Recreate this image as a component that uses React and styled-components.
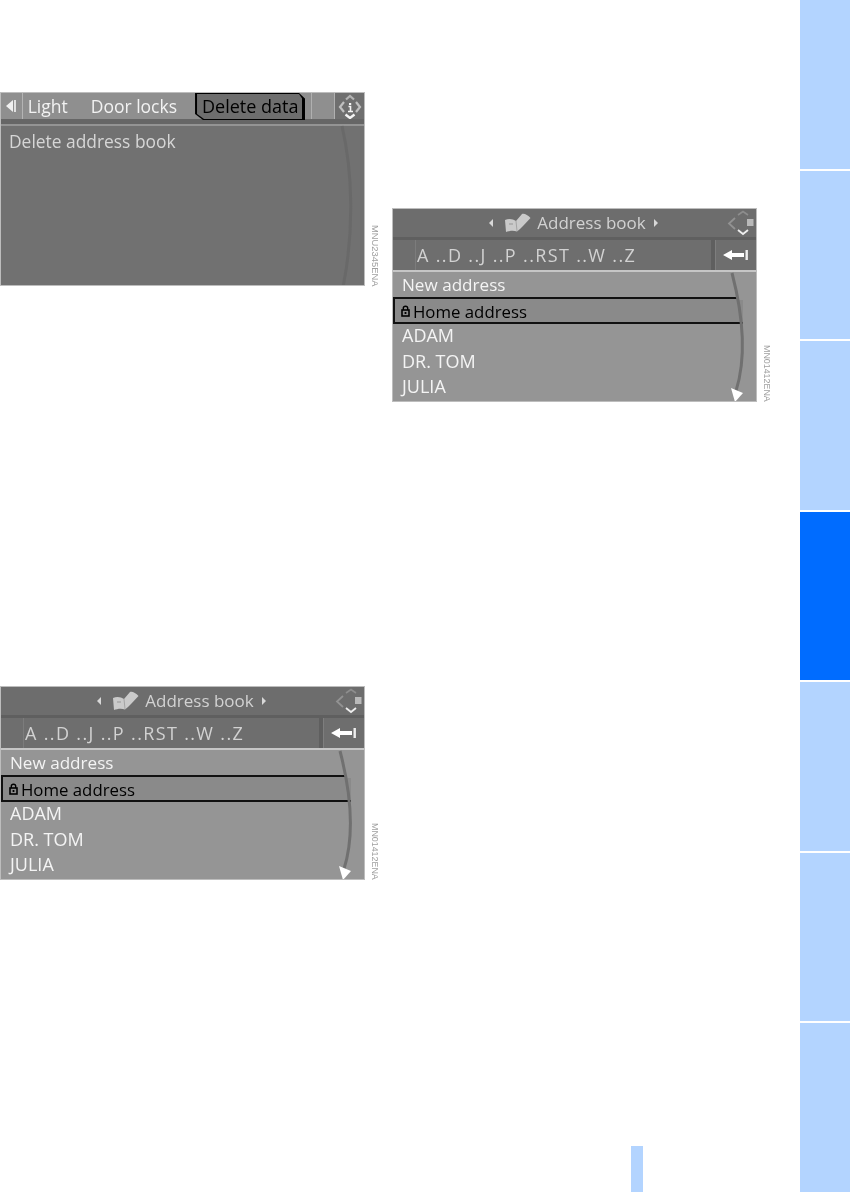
import React from "react";
import styled, { createGlobalStyle } from "styled-components";

const Global = createGlobalStyle`
  html, body { margin: 0; padding: 0; background: #fff; }
  #root { width: 850px; height: 1192px; overflow: hidden; }
`;

const Page = styled.div`
  display: flex;
  width: 850px;
  height: 1192px;
  font-family: "Open Sans", "Noto Sans", sans-serif;
`;
const Content = styled.main`
  flex: 0 0 800px;
  display: flex;
`;
const LeftColumn = styled.section`
  width: 392px;
  padding-top: 92px;
  display: flex;
  flex-direction: column;
  gap: 400px;
`;
const RightColumn = styled.section`
  flex: 1;
  padding-top: 208px;
  display: flex;
  flex-direction: column;
`;
const PageMarker = styled.div`
  margin-top: auto;
  margin-left: 239px;
  width: 12px;
  height: 46px;
  background: #b3d4ff;
`;
const SideTabs = styled.nav`
  flex: 0 0 50px;
  display: flex;
  flex-direction: column;
  gap: 2px;
`;
const SideTab = styled.div`
  flex: 1;
  background: ${(p) => (p.$active ? "#006cff" : "#b3d4ff")};
`;

const Figure = styled.figure`
  margin: 0;
  display: flex;
  align-items: flex-end;
  gap: 6px;
`;
const FigureCode = styled.figcaption`
  writing-mode: vertical-rl;
  font-family: "Liberation Sans", sans-serif;
  font-size: ${(p) => p.$size}px;
  line-height: 8px;
  color: #a0a0a0;
  filter: blur(0.35px);
`;
const Screen = styled.div`
  position: relative;
  width: 365px;
  height: 194px;
  box-sizing: border-box;
  display: flex;
  flex-direction: column;
  overflow: hidden;
  background: ${(p) => p.$bg};
  border: 1px solid #bdbdbd;
  filter: blur(0.35px);
`;
const Arc = styled.svg`
  position: absolute;
  top: 0;
  left: 0;
  pointer-events: none;
`;

/* Settings screen */
const TabBar = styled.div`
  height: 26px;
  display: flex;
  align-items: stretch;
  background: #8f8f8f;
  font-size: 17.5px;
  color: #f2f2f2;
`;
const TabArrowCell = styled.div`
  width: 21px;
  display: flex;
  align-items: center;
  justify-content: center;
  border-right: 1px solid #b4b4b4;
`;
const TabLabel = styled.div`
  margin-left: ${(p) => p.$gap}px;
  line-height: 26px;
  white-space: nowrap;
`;
const ActiveTab = styled.div`
  margin-left: 18px;
  width: 112px;
  height: 27px;
  box-sizing: border-box;
  padding: 1px 3px 1px 2px;
  background: #000;
  clip-path: polygon(0 0, 104px 0, 100% 6px, 100% 100%, 8px 100%, 0 calc(100% - 6px));
`;
const ActiveLabel = styled.div`
  height: 100%;
  padding-left: 5px;
  background: #6e6e6e;
  color: #000;
  font-size: 18px;
  line-height: 24px;
  white-space: nowrap;
  clip-path: polygon(0 0, 102px 0, 100% 5px, 100% 100%, 7px 100%, 0 calc(100% - 5px));
`;
const TabRule = styled.div`
  margin-left: ${(p) => p.$gap}px;
  width: 1px;
  background: #b0b0b0;
`;
const InfoCell = styled.div`
  margin-left: auto;
  width: 29px;
  background: #6f6f6f;
  display: flex;
  align-items: center;
  justify-content: center;
`;
const HeaderShade = styled.div`
  height: 5px;
  background: #666;
`;
const HeaderLine = styled.div`
  height: 2px;
  background: ${(p) => p.$color};
`;
const PlainRow = styled.div`
  padding-left: 8px;
  height: 30px;
  line-height: 30px;
  font-size: 17.4px;
  color: #d6d6d6;
`;

/* Address book screen */
const TitleBar = styled.div`
  height: 28px;
  position: relative;
  display: flex;
  align-items: center;
  justify-content: center;
  background: #6d6d6d;
  color: #d2d2d2;
  font-size: 17px;
`;
const TitleGroup = styled.div`
  display: flex;
  align-items: center;
  margin-right: 2px;
`;
const BookSlot = styled.span`
  margin-left: 11px;
  display: flex;
`;
const Title = styled.span`
  margin: 0 8px 0 6px;
  line-height: 28px;
`;
const NavWidget = styled.div`
  position: absolute;
  top: 0;
  right: 0;
  height: 28px;
`;
const BarShade = styled.div`
  height: 3px;
  background: #5f5f5f;
`;
const AlphaRow = styled.div`
  height: 30px;
  display: flex;
  background: #5f5f5f;
  gap: 4px;
`;
const AlphaCell = styled.div`
  flex: 1;
  display: flex;
  background: #6e6e6e;
  color: #d2d2d2;
  font-size: 18px;
  letter-spacing: 1.35px;
  line-height: 30px;
  white-space: nowrap;
`;
const AlphaSpacer = styled.div`
  width: 22px;
  margin-right: 1px;
  border-right: 1px solid #7c7c7c;
`;
const BackCell = styled.div`
  width: 40px;
  display: flex;
  align-items: center;
  justify-content: center;
  background: #6e6e6e;
  border-left: 1px solid #7e7e7e;
`;
const List = styled.div`
  flex: 1;
  display: flex;
  flex-direction: column;
  font-size: 17.1px;
  color: #f4f4f4;
`;
const Row = styled.div`
  height: 25px;
  line-height: ${(p) => p.$lh || 25}px;
  padding-left: 9px;
  font-size: ${(p) => (p.$caps ? "18px" : "inherit")};
  white-space: nowrap;
`;
const SelectedRow = styled.div`
  width: 350px;
  height: 27px;
  box-sizing: border-box;
  display: flex;
  align-items: center;
  gap: 3px;
  padding: 1px 0 0 6px;
  border: 2px solid #111;
  border-right: none;
  background: #8a8a8a;
  color: #000;
  font-size: 16.8px;
  clip-path: polygon(0 0, 345px 0, 345px 3px, 100% 3px, 100% 100%, 0 100%);
`;

const TabArrow = () => (
  <svg width="12" height="14" viewBox="0 0 12 14">
    <path d="M8 1 L1 7 L8 13 Z" fill="#f0f0f0" />
    <rect x="9" y="1" width="2" height="12" fill="#e0e0e0" />
  </svg>
);
const InfoIcon = () => (
  <svg width="24" height="26" viewBox="0 0 24 26" fill="none">
    <path d="M8 6.5 L12 3 L16 6.5" stroke="#b4b4b4" strokeWidth="2.2" />
    <path d="M6 9 L2 14 L6 19" stroke="#c0c0c0" strokeWidth="2.2" />
    <path d="M18 9 L22 14 L18 19" stroke="#c0c0c0" strokeWidth="2.2" />
    <path d="M7.5 21.5 L12 25 L16.5 21.5" stroke="#f4f4f4" strokeWidth="2.4" />
    <path d="M10.5 13.5 H12.5 V18 M10 18.5 H15" stroke="#f4f4f4" strokeWidth="1.6" />
    <rect x="11" y="10" width="2.2" height="2" fill="#f4f4f4" />
  </svg>
);
const NavIcon = () => (
  <svg width="32" height="28" viewBox="0 0 32 28" fill="none">
    <path d="M14 6 L19 2.5 L24 6" stroke="#8d8d8d" strokeWidth="1.6" />
    <path d="M11 9 L5 14.5 L11 20" stroke="#929292" strokeWidth="1.8" />
    <rect x="23" y="10" width="6.5" height="7" fill="#b9b9b9" />
    <path d="M14 21 L19 25 L24 21" stroke="#eee" strokeWidth="1.8" />
  </svg>
);
const SmallTriangle = ({ dir }) => (
  <svg width="4" height="8" viewBox="0 0 4 8">
    <path d={dir === "left" ? "M4 0 L0 4 L4 8 Z" : "M0 0 L4 4 L0 8 Z"} fill="#d8d8d8" />
  </svg>
);
const BookIcon = () => (
  <svg width="27" height="20" viewBox="0 0 27 20">
    <path d="M1 7 C5 5 9 6 12 8 L18 1 C20 0 24 2 26.5 5 L19 13 C17 15 15 17 13 18.5 C9 17 5 18 2 19 Z" fill="#cacaca" />
    <path d="M12 8 L13 18" stroke="#a4a4a4" strokeWidth="1" />
    <path d="M5 11 H9" stroke="#b0b0b0" strokeWidth="2" />
  </svg>
);
const BackIcon = () => (
  <svg width="26" height="12" viewBox="0 0 26 12">
    <path d="M0 6 L9 1 V4 H21 V8 H9 V11 Z" fill="#fff" />
    <rect x="22.5" y="1" width="2.4" height="10" fill="#eee" />
  </svg>
);
const LockIcon = () => (
  <svg width="9" height="12" viewBox="0 0 9 12" fill="none">
    <path d="M2.3 5 V3.2 C2.3 0.6 6.7 0.6 6.7 3.2 V5" stroke="#000" strokeWidth="1.4" />
    <rect x="1" y="5" width="7" height="6" stroke="#000" strokeWidth="1.6" />
    <rect x="3.6" y="7" width="1.8" height="2" fill="#000" />
  </svg>
);

const SettingsScreen = () => (
  <Figure>
    <Screen $bg="#717171">
      <TabBar>
        <TabArrowCell><TabArrow /></TabArrowCell>
        <TabLabel $gap={5}>Light</TabLabel>
        <TabLabel $gap={23}>Door locks</TabLabel>
        <ActiveTab><ActiveLabel>Delete data</ActiveLabel></ActiveTab>
        <TabRule $gap={6} />
        <TabRule $gap={22} />
        <InfoCell><InfoIcon /></InfoCell>
      </TabBar>
      <HeaderShade />
      <HeaderLine $color="#949494" />
      <PlainRow>Delete address book</PlainRow>
      <Arc width="365" height="194" viewBox="0 0 365 194" fill="none">
        <path d="M341 33 C352 80 353 140 342 194" stroke="#696969" strokeWidth="3" />
      </Arc>
    </Screen>
    <FigureCode $size={9.4}>MNU2345ENA</FigureCode>
  </Figure>
);

const AddressScreen = () => (
  <Figure>
    <Screen $bg="#959595">
      <TitleBar>
        <TitleGroup>
          <SmallTriangle dir="left" />
          <BookSlot><BookIcon /></BookSlot>
          <Title>Address book</Title>
          <SmallTriangle dir="right" />
        </TitleGroup>
        <NavWidget><NavIcon /></NavWidget>
      </TitleBar>
      <BarShade />
      <AlphaRow>
        <AlphaCell>
          <AlphaSpacer />
          <span>A ..D ..J ..P ..RST ..W ..Z</span>
        </AlphaCell>
        <BackCell><BackIcon /></BackCell>
      </AlphaRow>
      <HeaderLine $color="#c6c6c6" />
      <List>
        <Row>New address</Row>
        <SelectedRow><LockIcon />Home address</SelectedRow>
        <Row $caps $lh={23}>ADAM</Row>
        <Row $caps>DR. TOM</Row>
        <Row $caps>JULIA</Row>
      </List>
      <Arc width="365" height="194" viewBox="0 0 365 194" fill="none">
        <path d="M339 64 C351 110 353 150 343 182" stroke="#707070" strokeWidth="3" />
        <path d="M338 179 L350 184 L342 193 Z" fill="#fff" />
      </Arc>
    </Screen>
    <FigureCode $size={8.9}>MN01412ENA</FigureCode>
  </Figure>
);

export default function App() {
  return (
    <Page>
      <Global />
      <Content>
        <LeftColumn>
          <SettingsScreen />
          <AddressScreen />
        </LeftColumn>
        <RightColumn>
          <AddressScreen />
          <PageMarker />
        </RightColumn>
      </Content>
      <SideTabs>
        <SideTab />
        <SideTab />
        <SideTab />
        <SideTab $active />
        <SideTab />
        <SideTab />
        <SideTab />
      </SideTabs>
    </Page>
  );
}
